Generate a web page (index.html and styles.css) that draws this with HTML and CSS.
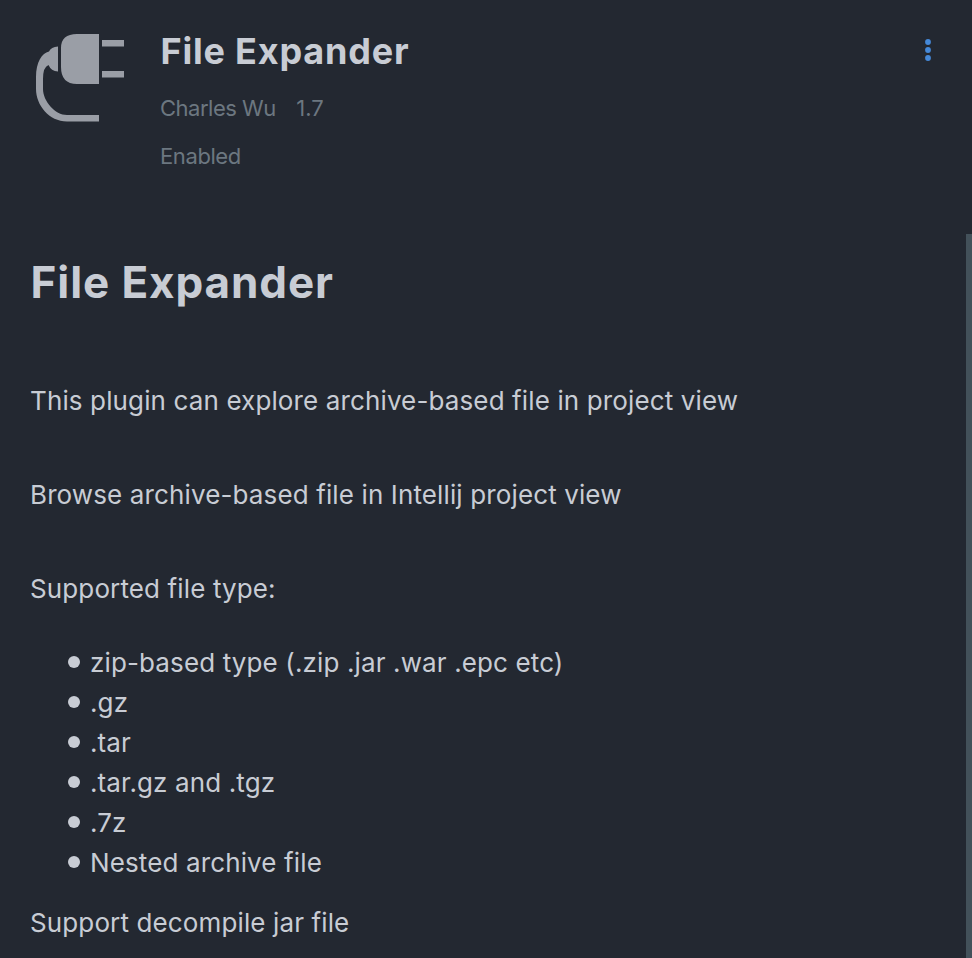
FILE: index.html
```html
<!DOCTYPE html>
<html lang="en">
<head>
<meta charset="utf-8">
<title>File Expander</title>
<link rel="stylesheet" href="styles.css">
</head>
<body>
<main class="panel">
  <header class="plugin-header">
    <svg class="plugin-icon" viewBox="0 0 90 90" aria-hidden="true">
      <path d="M26 1H64V51H42Q26 51 26 34V15Q26 1 42 1Z"/>
      <path d="M67 7H89V13.5H67ZM67 38H89V44.500H67Z"/>
      <path d="M23 13.500V38.500Q16 38 13.500 32Q8 34 8 46V56C8 68 20 82 32 82H64V88.500H32C14 88.500 1 72 1 56V44C1 29 7 20 14 18.500Q16 14 23 13.500Z"/>
    </svg>
    <div class="plugin-info">
      <h2 class="plugin-name">File Expander</h2>
      <div class="plugin-meta"><span class="vendor">Charles Wu</span><span class="version">1.7</span></div>
      <div class="plugin-state">Enabled</div>
    </div>
    <svg class="menu-icon" viewBox="0 0 8 24" aria-hidden="true">
      <circle cx="4" cy="4" r="2.900"/><circle cx="4" cy="12" r="2.900"/><circle cx="4" cy="20" r="2.900"/>
    </svg>
  </header>
  <section class="description">
    <h1 class="heading">File Expander</h1>
    <p class="line-a">This plugin can explore archive-based file in project view</p>
    <p class="line-b">Browse archive-based file in Intellij project view</p>
    <p class="line-c">Supported file type:</p>
    <ul class="types">
      <li>zip-based type (.zip .jar .war .epc etc)</li>
      <li>.gz</li>
      <li>.tar</li>
      <li>.tar.gz and .tgz</li>
      <li>.7z</li>
      <li>Nested archive file</li>
    </ul>
    <p class="line-d">Support decompile jar file</p>
  </section>
</main>
<div class="scrollbar"></div>
</body>
</html>
```
FILE: styles.css
```css
* { box-sizing: border-box; margin: 0; padding: 0; }
body {
  display: flex;
  height: 958px;
  overflow: hidden;
  background: #232831;
  color: #c8ccd4;
  font: 400 26px/40px Inter, "Liberation Sans", sans-serif;
  letter-spacing: 0.125px;
  white-space: nowrap;
}
.panel { width: 966px; flex: none; padding: 29px 34px 0 30px; }
.plugin-header { display: flex; height: 225px; }
.plugin-icon { width: 90px; height: 90px; margin: 4px 0 0 5px; fill: #9a9ea6; }
.plugin-info { flex: 1; margin-left: 35px; }
.plugin-name { font-size: 36px; line-height: 44px; font-weight: 700; letter-spacing: 0.8px; text-indent: 0.5px; }
.plugin-meta, .plugin-state { font-size: 22px; line-height: 32px; letter-spacing: -0.5px; color: #6c7780; }
.plugin-meta { display: flex; gap: 20.500px; margin-top: 19px; }
.version { letter-spacing: 0; }
.plugin-state { margin-top: 16px; letter-spacing: -0.4px; }
.menu-icon { width: 8px; height: 24px; margin-top: 9px; fill: #4589d8; }
.heading { font-size: 44px; line-height: 56px; font-weight: 700; letter-spacing: 0.9px; text-indent: 0.6px; margin-bottom: 71px; }
.line-a, .line-b { margin-bottom: 54px; }
.line-c { margin-bottom: 34px; }
.types { list-style: none; padding-left: 38px; margin-bottom: 20px; }
.types li { display: flex; }
.types li::before {
  content: "";
  width: 12px;
  height: 12px;
  margin: 13px 10px 0 0;
  border-radius: 50%;
  background: #c8ccd4;
}
.scrollbar { width: 6px; height: 724px; margin-top: 234px; background: #43515a; }
```
